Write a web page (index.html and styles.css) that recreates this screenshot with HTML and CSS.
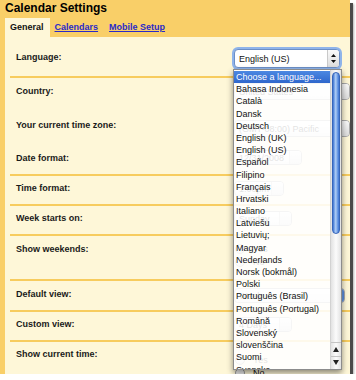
FILE: index.html
```html
<!DOCTYPE html>
<html lang="en">
<head>
<meta charset="UTF-8">
<meta name="viewport" content="width=device-width, initial-scale=1.0">
<title>Calendar Settings</title>
<link rel="stylesheet" href="styles.css">
</head>
<body>
<div class="window">
  <div class="head">
    <h1 class="title">Calendar Settings</h1>
    <div class="tabs">
      <span class="tab active">General</span>
      <a class="tab" href="#">Calendars</a>
      <a class="tab" href="#">Mobile Setup</a>
    </div>
  </div>

  <div class="panel">
    <div class="row line row-lang">
      <div class="label">Language:</div>
      <div class="select select-focus w-lang"><span>English (US)</span><i class="arrows"><svg width="5" height="9" viewBox="0 0 5 9"><path d="M2.5 0L5 3H0z M2.5 9L5 6H0z" fill="#111"/></svg></i></div>
    </div>

    <div class="row row-region">
      <div class="line line-country">
        <div class="label">Country:</div>
        <div class="select w-wide"><span>United States</span><i class="arrows"></i></div>
      </div>
      <div class="line line-tz">
        <div class="label">Your current time zone:</div>
        <div class="select w-wide"><span>(GMT-08:00) Pacific</span><i class="arrows"></i></div>
      </div>
      <div class="line line-date">
        <div class="label">Date format:</div>
        <div class="select w-date"><span>12/31/2008</span><i class="arrows"></i></div>
      </div>
    </div>

    <div class="row line row-time">
      <div class="label">Time format:</div>
      <div class="select w-time"><span>1:00pm</span><i class="arrows"></i></div>
    </div>

    <div class="row line row-week">
      <div class="label">Week starts on:</div>
      <div class="select w-short"><span>Sunday</span><i class="arrows"></i></div>
    </div>

    <div class="row line row-weekends">
      <div class="label">Show weekends:</div>
      <div class="radios">
        <div class="radio"><i></i>Yes</div>
        <div class="radio"><i></i>No</div>
      </div>
    </div>

    <div class="row line row-view">
      <div class="label">Default view:</div>
      <div class="select select-blue w-view"><span>Week</span><i class="arrows"></i></div>
    </div>

    <div class="row line row-custom">
      <div class="label">Custom view:</div>
      <div class="select w-short"><span>4 Days</span><i class="arrows"></i></div>
    </div>

    <div class="row line row-now">
      <div class="label">Show current time:</div>
      <div class="radios">
        <div class="radio"><i></i>Yes</div>
        <div class="radio"><i></i>No</div>
      </div>
    </div>
  </div>

  <!-- open language popup -->
  <div class="menu">
    <ul>
      <li class="on">Choose a language...</li>
      <li>Bahasa Indonesia</li>
      <li>Català</li>
      <li>Dansk</li>
      <li>Deutsch</li>
      <li>English (UK)</li>
      <li>English (US)</li>
      <li>Español</li>
      <li>Filipino</li>
      <li>Français</li>
      <li>Hrvatski</li>
      <li>Italiano</li>
      <li>Latviešu</li>
      <li>Lietuvių;</li>
      <li>Magyar</li>
      <li>Nederlands</li>
      <li>Norsk (bokmål)</li>
      <li>Polski</li>
      <li>Português (Brasil)</li>
      <li>Português (Portugal)</li>
      <li>Română</li>
      <li>Slovenský</li>
      <li>slovenščina</li>
      <li>Suomi</li>
      <li>Svenska</li>
    </ul>
    <div class="scroll">
      <div class="thumb"></div>
      <div class="track"></div>
      <div class="btns">
        <span><svg width="6" height="5" viewBox="0 0 6 5"><path d="M3 0L6 5H0z" fill="#222"/></svg></span>
        <span><svg width="6" height="5" viewBox="0 0 6 5"><path d="M3 5L6 0H0z" fill="#222"/></svg></span>
      </div>
    </div>
  </div>
</div>
</body>
</html>
```

FILE: styles.css
```css
body {margin:0;background:#fff;font-family:'Liberation Sans',Arial,sans-serif;color:#111;}
.window {position:relative;width:350px;height:374px;background:#f9cf68;box-shadow:3px 3px 0 #4a4a4a,4px 4px 2px rgba(0,0,0,.3);}

.head {height:37px;}
.title {margin:0;padding:1px 0 0 5px;font-size:12px;line-height:15px;font-weight:bold;color:#000;}
.tabs {display:flex;margin-top:2px;height:19px;}
.tab {padding:0 6px 0 5px;font-size:9px;line-height:19px;font-weight:bold;color:#2a2ac8;text-decoration:underline;}
.tab.active {margin-left:5px;background:#fef7d8;color:#111;text-decoration:none;}

.panel {margin-left:5px;height:337px;background:#fef7d8;}
.row {margin-left:5px;border-top:2px solid #f7cc5e;box-sizing:border-box;}
.line {display:grid;grid-template-columns:224px auto;align-items:start;}
.label {padding-left:6px;font-size:9px;line-height:12px;font-weight:bold;color:#1a1a1a;}

.row-lang {height:39px;border-top:0;}
.row-lang .label {margin-top:14px;}
.row-lang .select {margin-top:12px;height:19px;}

.row-region {height:98px;}
.line-country {height:34px;}
.line-country .label {margin-top:7px;}
.line-country .select {margin-top:5px;height:17px;}
.line-tz {height:34px;}
.line-tz .label {margin-top:7px;}
.line-tz .select {margin-top:8px;height:17px;}
.line-date {height:28px;}
.line-date .label {margin-top:6px;}
.line-date .select {margin-top:4px;}

.row-time, .row-week, .row-custom {height:30px;}
.row-time .label, .row-week .label, .row-custom .label {margin-top:6px;}
.row-time .select, .row-week .select, .row-custom .select {margin-top:5px;}
.row-weekends {height:45px;}
.row-weekends .label {margin-top:7px;}
.row-weekends .radios {margin-top:6px;}
.row-view {height:31px;}
.row-view .label, .row-view .select {margin-top:7px;}
.row-now {height:34px;}
.row-now .label {margin-top:6px;}
.row-now .radios {margin-top:11px;}

.select {display:flex;align-items:center;height:15px;padding-left:4px;box-sizing:border-box;border:1px solid #a9a9a9;border-radius:4px;background:linear-gradient(#fff,#ececec);font-size:9px;}
.select span {flex:1;white-space:nowrap;overflow:hidden;}
.arrows {display:flex;align-items:center;justify-content:center;width:11px;align-self:stretch;border-left:1px solid #c9c9c9;border-radius:0 3px 3px 0;background:linear-gradient(#fafafa,#dcdcdc);}
.select-focus {border-color:#6c8fc6;box-shadow:0 0 0 2px #8fb4ea;background:#fff;}
.select-blue .arrows {background:linear-gradient(to right,#4f86dc,#a7c7f2,#4f86dc);}
.w-lang {width:106px;}
.w-wide {width:116px;}
.w-date {width:68px;}
.w-time {width:50px;}
.w-short {width:58px;}
.w-view {width:111px;}

.radios {font-size:9px;}
.radio {display:flex;align-items:center;gap:8px;height:13px;padding-left:1px;}
.radio i {width:10px;height:10px;box-sizing:border-box;border:1px solid #9a9a9a;border-radius:50%;background:linear-gradient(#fff,#d8d8d8);}

.menu {position:absolute;left:233px;top:69px;width:109px;height:301px;box-sizing:border-box;display:flex;border:1px solid #8c8c8c;background:rgba(255,255,255,.88);box-shadow:0 3px 6px rgba(0,0,0,.45);}
.menu ul {flex:1;margin:0;padding:1px 0 0;list-style:none;overflow:hidden;}
.menu li {height:12.2px;padding-left:2px;font-size:9px;line-height:12.2px;white-space:nowrap;color:#111;}
.menu li.on {background:linear-gradient(#4c88e2,#2f67cc);color:#fff;}
.scroll {display:flex;flex-direction:column;width:10px;border-left:1px solid #d2d2d2;background:linear-gradient(to right,#e2e2e2,#fbfbfb 50%,#e2e2e2);}
.thumb {margin:2px 1px 0;height:162px;box-sizing:border-box;border:1px solid #3766ba;border-radius:5px;background:linear-gradient(to right,#3d74d3,#b1cff6 45%,#76a3e8 70%,#3d74d3);}
.track {flex:1;}
.btns {display:flex;flex-direction:column;height:26px;border-top:1px solid #c4c4c4;}
.btns span {flex:1;display:flex;align-items:center;justify-content:center;}
.btns span + span {border-top:1px solid #c4c4c4;}
```
